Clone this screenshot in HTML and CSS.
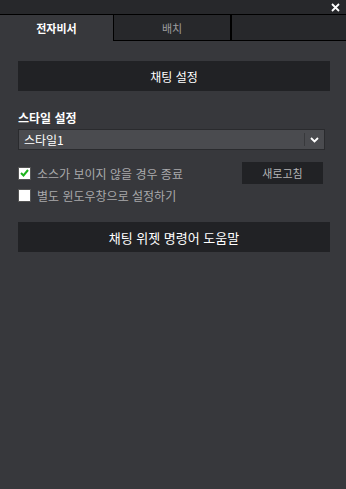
FILE: index.html
```html
<!DOCTYPE html>
<html lang="ko">
<head>
    <meta charset="utf-8">
    <title>전자비서</title>
    <link rel="stylesheet" href="styles.css">
</head>
<body>
    <div class="titlebar">
        <span class="close">
            <svg width="9" height="9" viewBox="0 0 9 9"><path d="M1 1L8 8M8 1L1 8" stroke="#fff" stroke-width="1.8"/></svg>
        </span>
    </div>
    <div class="tabs">
        <div class="tab active">전자비서</div>
        <div class="tab">배치</div>
        <div class="tab empty"></div>
    </div>
    <div class="panel">
        <div class="btn wide">채팅 설정</div>

        <div class="label">스타일 설정</div>
        <div class="select">
            <span class="select-text">스타일1</span>
            <span class="select-arrow">
                <svg width="9" height="6" viewBox="0 0 9 6"><path d="M1 1L4.5 4.5L8 1" stroke="#fff" stroke-width="1.8" fill="none"/></svg>
            </span>
        </div>

        <div class="check-row first">
            <span class="box">
                <svg width="9" height="8" viewBox="0 0 9 8"><path d="M1 4L3.5 6.5L8 1" stroke="#1db31d" stroke-width="2" fill="none"/></svg>
            </span>
            <span class="check-text">소스가 보이지 않을 경우 종료</span>
            <div class="btn small">새로고침</div>
        </div>
        <div class="check-row">
            <span class="box"></span>
            <span class="check-text">별도 윈도우창으로 설정하기</span>
        </div>

        <div class="btn wide help">채팅 위젯 명령어 도움말</div>
    </div>
</body>
</html>
```

FILE: styles.css
```css
body {
    margin: 0;
    background: #37383c;
    font-family: "Noto Sans CJK KR", "Noto Sans", sans-serif;
    color: #fff;
    height: 489px;
}

/* title bar + tabs */
.titlebar {
    height: 14px;
    background: #27282b;
    border-bottom: 1px solid #000;
    display: flex;
    justify-content: flex-end;
    align-items: center;
}

.close {
    display: flex;
    margin-right: 6px;
    margin-top: 1px;
}

.tabs {
    display: flex;
    height: 26px;
}

.tab {
    box-sizing: border-box;
    background: #27282b;
    border-bottom: 1px solid #000;
    color: #9c9c9e;
    font-size: 11px;
    display: flex;
    align-items: center;
    justify-content: center;
    width: 118px;
    border-left: 1px solid #000;
    border-right: 1px solid #000;
}

.tab.active {
    width: 113px;
    background: #37383c;
    border: none;
    color: #fff;
    font-weight: bold;
}

.tab.empty {
    flex: 1;
    border-right: none;
}

/* panel body */
.panel {
    padding: 20px 16px 0 18px;
}

.btn {
    background: #212225;
    display: flex;
    align-items: center;
    justify-content: center;
}

.btn.wide {
    height: 30px;
    font-size: 12px;
}

.btn.small {
    width: 81px;
    height: 22px;
    font-size: 11px;
    color: #b4b4b6;
    margin-left: auto;
    margin-right: 7px;
}

.label {
    font-size: 12px;
    font-weight: bold;
    margin-top: 18px;
    line-height: 17px;
}

.select {
    box-sizing: border-box;
    height: 21px;
    margin-top: 3px;
    width: 307px;
    background: #4a4b4f;
    border: 1px solid #2a2b2e;
    display: flex;
    align-items: center;
}

.select-text {
    font-size: 12px;
    padding-left: 5px;
    flex: 1;
}

.select-arrow {
    height: 13px;
    width: 19px;
    border-left: 1px solid #38393c;
    display: flex;
    align-items: center;
    justify-content: center;
}

.check-row {
    display: flex;
    align-items: center;
    height: 22px;
}

.check-row.first {
    margin-top: 12px;
}

.box {
    box-sizing: border-box;
    width: 13px;
    height: 13px;
    background: #fff;
    border: 1px solid #555;
    display: flex;
    align-items: center;
    justify-content: center;
    margin-right: 6px;
}

.check-text {
    font-size: 12px;
    color: #a9a9ab;
}

.btn.help {
    margin-top: 16px;
    font-size: 13px;
}
```
